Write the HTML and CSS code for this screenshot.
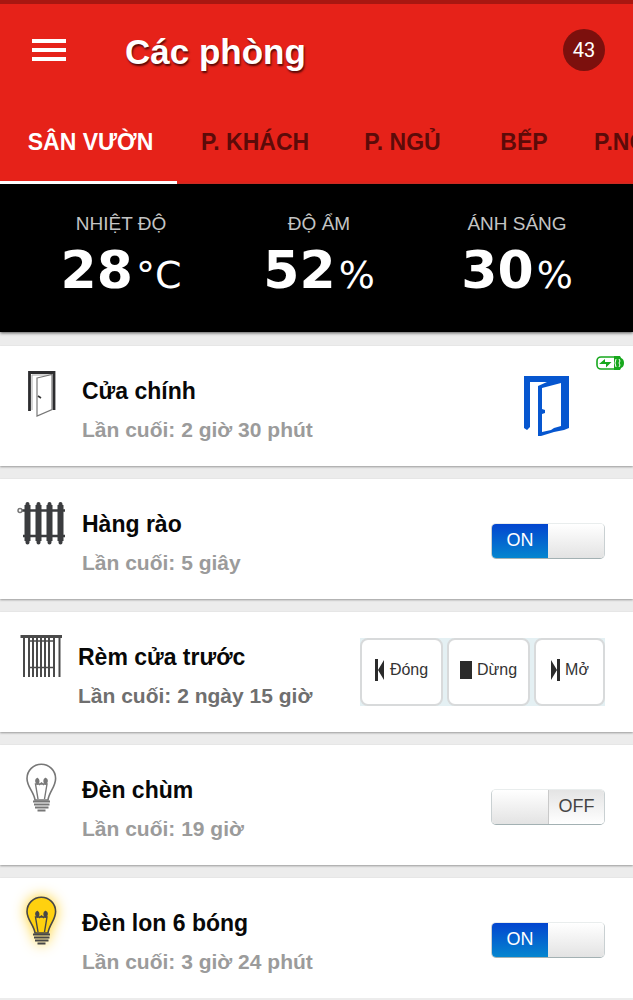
FILE: index.html
```html
<!DOCTYPE html>
<html lang="vi">
<head>
<meta charset="utf-8">
<meta name="viewport" content="width=device-width, initial-scale=1">
<title>Các phòng</title>
<link rel="stylesheet" href="styles.css">
</head>
<body>
<svg class="defs" aria-hidden="true">
  <symbol id="bulb" viewBox="0 0 60 60">
    <path class="glass" d="M23 43C22 35 15 30 15 21.500A14.300 14.300 0 0 1 43.600 21.500C43.600 30 37 35 36 43Z" stroke-width="1.600"/>
    <g fill="none" stroke-width="1.400">
      <path d="M26 42L23.500 27H35L32.500 42M27 28l2.500-2 2.500 2"/>
      <path d="M25.500 21.500c-2.500 1-2 4 0 5.500 2-1.500 1.500-4.500 0-5.500ZM33.500 21.500c-2 1-2 4 0 5.500 2-1.500 2.500-4.500 0-5.500Z" fill="currentColor"/>
    </g>
    <path d="M21 44.500H38M22 47.500H37.500M23 50.500H36.500M25.500 53.500H33.500" stroke-width="2"/>
  </symbol>
</svg>
<header class="appbar">
  <div class="topline">
    <button class="menu" type="button" aria-label="Menu"><span></span><span></span><span></span></button>
    <h1 class="title">Các phòng</h1>
    <span class="count">43</span>
  </div>
  <nav class="tabs">
    <a class="tab active" href="#">SÂN VƯỜN</a>
    <a class="tab" href="#">P. KHÁCH</a>
    <a class="tab" href="#">P. NGỦ</a>
    <a class="tab" href="#">BẾP</a>
    <a class="tab last" href="#">P.NG</a>
  </nav>
</header>
<section class="stats">
  <div class="stat"><span class="label">NHIỆT ĐỘ</span><span class="value"><b>28</b>°C</span></div>
  <div class="stat"><span class="label">ĐỘ ẨM</span><span class="value"><b>52</b>%</span></div>
  <div class="stat"><span class="label">ÁNH SÁNG</span><span class="value"><b>30</b>%</span></div>
</section>
<main class="list">
  <article class="card">
    <svg class="icon" viewBox="0 0 60 60" fill="none" aria-hidden="true">
      <path d="M17.500 53V14.500H42V52" stroke="#2c2c2e" stroke-width="2.800"/>
      <path d="M20 52V17H40" stroke="#aaa" stroke-width="1"/>
      <path d="M25 20L40 16.500V51.500L25 58Z" fill="#fff" stroke="#777" stroke-width="1.200"/>
      <path d="M26 38l3 2" stroke="#333" stroke-width="1.600"/>
    </svg>
    <div class="info"><h2 class="name">Cửa chính</h2><p class="last-seen">Lần cuối: 2 giờ 30 phút</p></div>
    <button class="door" type="button" aria-label="Cửa chính">
      <svg viewBox="0 0 46 60" fill="none" aria-hidden="true">
        <path d="M1 0H46V52L41 54 31 56 18 60H15V10L24 6H7V51L4 54 1 52Z" fill="#0656cf"/>
        <path d="M19 12L38 7V50L31 52 28 54 19 56V38L22 37V34L19 33Z" fill="#fff"/>
      </svg>
    </button>
    <svg class="battery" viewBox="0 0 28 16" fill="none" aria-hidden="true">
      <rect x="1" y="2" width="24" height="12" rx="4" stroke="#17a81d" stroke-width="1.600"/>
      <path d="M18 1h6l1 2q3 1 3 5t-3 5l-1 2h-6z" fill="#17a81d"/>
      <path d="M20 4q-2 4 0 8M23 4l1 2-1 2 1 2-1 2" stroke="#fff" stroke-width="1"/>
      <path d="M3 9L9 4v3h6.500L10 12.500V9z" fill="#17a81d"/>
    </svg>
  </article>
  <article class="card">
    <svg class="icon" viewBox="0 0 60 60" fill="none" stroke="#3b3c3f" aria-hidden="true">
      <path d="M10 19.500H53M11 45H53" stroke-width="2.600"/>
      <path d="M15.500 14V50M26.500 14V50M37.500 14V50M48.500 14V50" stroke-width="6"/>
      <path d="M15.500 13V51.500M26.500 13V51.500M37.500 13V51.500M48.500 13V51.500" stroke-width="4" stroke-linecap="round"/>
      <circle cx="8" cy="19.500" r="2" stroke="#777" stroke-width="1.500"/>
    </svg>
    <div class="info"><h2 class="name">Hàng rào</h2><p class="last-seen">Lần cuối: 5 giây</p></div>
    <label class="switch"><input type="checkbox" checked aria-label="Hàng rào"><span class="half on"></span><span class="half off"></span></label>
  </article>
  <article class="card recent">
    <svg class="icon" viewBox="0 0 60 60" fill="none" stroke="#4a4a4a" aria-hidden="true">
      <path d="M8.500 12.500H50" stroke-width="3"/>
      <path d="M12 13V53M17 13V53M21 13V53M25 13V53M29 13V53M33 13V53M37 13V53M42 13V53M47.500 13V53" stroke-width="2"/>
      <path d="M17 17H42M17 43.500H42" stroke-width="1.400"/>
    </svg>
    <div class="info"><h2 class="name">Rèm cửa trước</h2><p class="last-seen">Lần cuối: 2 ngày 15 giờ</p></div>
    <div class="controls">
      <button class="control" type="button"><svg class="glyph" viewBox="0 0 10 24" aria-hidden="true"><path d="M0 1h3v22H0zM9 2v20L3 12z"/></svg>Đóng</button>
      <button class="control" type="button"><svg class="glyph wide" viewBox="0 0 12 24" aria-hidden="true"><path d="M0 3h12v18H0z"/></svg>Dừng</button>
      <button class="control" type="button"><svg class="glyph" viewBox="0 0 10 24" aria-hidden="true"><path d="M7 1h3v22H7zM1 2v20l6-10z"/></svg>Mở</button>
    </div>
  </article>
  <article class="card">
    <svg class="icon bulb" aria-hidden="true"><use href="#bulb"/></svg>
    <div class="info"><h2 class="name">Đèn chùm</h2><p class="last-seen">Lần cuối: 19 giờ</p></div>
    <label class="switch"><input type="checkbox" aria-label="Đèn chùm"><span class="half on"></span><span class="half off"></span></label>
  </article>
  <article class="card">
    <svg class="icon bulb lit" aria-hidden="true"><use href="#bulb"/></svg>
    <div class="info"><h2 class="name">Đèn lon 6 bóng</h2><p class="last-seen">Lần cuối: 3 giờ 24 phút</p></div>
    <label class="switch"><input type="checkbox" checked aria-label="Đèn lon 6 bóng"><span class="half on"></span><span class="half off"></span></label>
  </article>
</main>
</body>
</html>
```
FILE: styles.css
```css
* { box-sizing: border-box; }
body {
  margin: 0;
  background: #ececec;
  font-family: "Liberation Sans", Arial, sans-serif;
  overflow-x: hidden;
}
h1, h2, p { margin: 0; }
button { font: inherit; padding: 0; cursor: pointer; }
.defs { display: none; }

.appbar { background: #e62219; border-top: 4px solid #a81711; }
.topline { display: flex; align-items: center; height: 92px; padding: 0 28px 0 32px; }
.menu {
  display: flex; flex-direction: column; gap: 5px;
  width: 34px; border: 0; background: none;
}
.menu span { height: 4px; background: #fff; }
.title {
  margin-left: 59px; padding-top: 3px;
  color: #fff; font-size: 35px; line-height: 44px;
  text-shadow: 1px 2px 2px rgba(40, 0, 0, .75);
}
.count {
  display: grid; place-items: center;
  width: 42px; height: 42px; margin-left: auto;
  border-radius: 50%; background: #7c100d;
  color: #fff; font: 20px Roboto, "Liberation Sans", sans-serif;
}
.tabs {
  display: grid; grid-template-columns: 177px 156px 139px 104px minmax(0, 1fr);
  height: 88px; overflow: hidden;
}
.tab {
  display: flex; align-items: center; justify-content: center;
  border-bottom: 3px solid transparent; padding-top: 8px;
  color: #5c0b09; font-size: 23px; font-weight: bold;
  text-decoration: none; white-space: nowrap;
}
.tab.active { border-color: #fff; color: #fff; padding-left: 4px; }
.tab.last { justify-content: flex-start; padding-left: 18px; }

.stats {
  display: grid; grid-template-columns: repeat(3, 1fr);
  height: 148px; padding: 28px 17px 0 22px;
  background: #000; color: #fff; box-shadow: 0 1px 3px #555;
}
.stat { display: flex; flex-direction: column; align-items: center; }
.label { color: #c4c4c4; font-size: 19px; line-height: 24px; }
.value {
  font-family: "DejaVu Sans", sans-serif; font-size: 38px; line-height: 68px;
  white-space: nowrap;
}
.value b { font-size: 52px; margin-right: 3px; }

.list { display: grid; gap: 13px; margin-top: 14px; }
.card {
  position: relative; display: flex; height: 120px; padding: 0 28px 0 12px;
  background: #fff; box-shadow: 0 1px 2px #999;
}
.icon { flex: none; width: 60px; height: 60px; margin-top: 12px; color: #777; stroke-linecap: butt; }
.bulb { stroke: #777; fill: none; }
.lit { color: #474747; stroke: #474747; fill: #ffd10f; overflow: visible; filter: drop-shadow(0 0 7px #ffd020); }
.info { flex: 1; min-width: 0; padding: 31px 0 0 10px; white-space: nowrap; }
.name { font-size: 23px; line-height: 28px; color: #080808; }
.last-seen { margin-top: 13px; font-size: 21px; line-height: 24px; font-weight: bold; color: #9b9b9b; }
.recent .info { padding-left: 6px; }
.recent .last-seen { color: #6f6f6f; }
.door { align-self: center; width: 46px; height: 60px; margin-right: 36px; border: 0; background: none; }
.door svg { display: block; width: 100%; height: 100%; }
.battery { position: absolute; top: 9px; right: 9px; width: 28px; height: 16px; }

.switch {
  position: relative; flex: none; display: grid; grid-template-columns: 1fr 1fr;
  width: 114px; height: 36px; margin-top: 44px; overflow: hidden;
  border: 1px solid #c9d0d2; border-top-color: #e9eded; border-bottom-color: #a3b1b3; border-radius: 5px;
  font-size: 18px; cursor: pointer;
}
.switch input { position: absolute; inset: 0; margin: 0; opacity: 0; cursor: pointer; }
.half { display: grid; place-items: center; padding-bottom: 2px; background: linear-gradient(#fff, #e3e3e3); }
.switch input:checked ~ .on { background: linear-gradient(#0345cf, #0586cf); color: #fff; }
.switch input:checked ~ .on::before { content: "ON"; }
.switch input:not(:checked) ~ .off { background: linear-gradient(#e4e4e4, #fff); border-left: 1px solid #c9c9c9; color: #444; }
.switch input:not(:checked) ~ .off::before { content: "OFF"; }

.controls { display: flex; gap: 4px; align-self: flex-start; margin-top: 26px; background: #e4f0f3; }
.control {
  display: flex; align-items: center; justify-content: center; gap: 5px;
  width: 83px; height: 68px; padding-bottom: 4px;
  border: 2px solid #d8dadb; border-radius: 8px; background: #fff;
  color: #333; font-family: "Liberation Sans", Arial, sans-serif; font-size: 16px;
}
.control:last-child { width: 71px; }
.glyph { flex: none; width: 10px; height: 24px; fill: #2b2b2b; }
.glyph.wide { width: 12px; }
```
